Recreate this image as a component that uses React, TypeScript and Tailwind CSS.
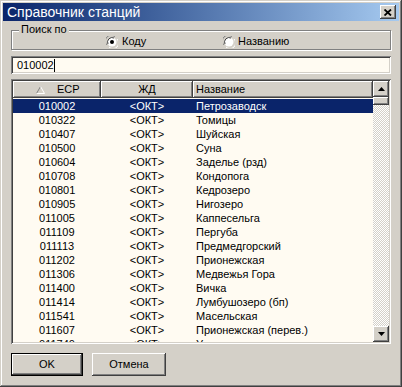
const ROWS: [string, string][] = [
  ["010002", "Петрозаводск"],
  ["010322", "Томицы"],
  ["010407", "Шуйская"],
  ["010500", "Суна"],
  ["010604", "Заделье (рзд)"],
  ["010708", "Кондопога"],
  ["010801", "Кедрозеро"],
  ["010905", "Нигозеро"],
  ["011005", "Каппесельга"],
  ["011109", "Пергуба"],
  ["011113", "Предмедгорский"],
  ["011202", "Прионежская"],
  ["011306", "Медвежья Гора"],
  ["011400", "Вичка"],
  ["011414", "Лумбушозеро (бп)"],
  ["011541", "Масельская"],
  ["011607", "Прионежская (перев.)"],
  ["011740", "Уссозеро"],
];

const raised =
  "bg-[#d4d0c8] shadow-[inset_-1px_-1px_#404040,inset_1px_1px_#fff,inset_-2px_-2px_#808080,inset_2px_2px_#d4d0c8]";
const sunken =
  "shadow-[inset_1px_1px_#808080,inset_-1px_-1px_#fff,inset_2px_2px_#404040,inset_-2px_-2px_#d4d0c8]";
const headerCell =
  "bg-[#d4d0c8] shadow-[inset_-1px_-1px_#404040,inset_1px_1px_#fff,inset_-2px_-2px_#808080]";

function Radio({ checked }: { checked?: boolean }) {
  return (
    <svg width="12" height="12" viewBox="0 0 12 12" className="shrink-0">
      <path d="M11 3 A5.5 5.5 0 0 1 3 11" stroke="#fff" strokeWidth="1" fill="none" />
      <path d="M1 9 A5.5 5.5 0 0 1 9 1" stroke="#808080" strokeWidth="1" fill="none" />
      <circle cx="6" cy="6" r="4.5" fill="#fff" />
      <path d="M2 8 A4.5 4.5 0 0 1 8 2" stroke="#404040" strokeWidth="1" fill="none" />
      {checked && <circle cx="6" cy="6" r="2" fill="#000" />}
    </svg>
  );
}

function Arrow({ up }: { up?: boolean }) {
  return (
    <svg width="7" height="4" viewBox="0 0 7 4">
      <path d={up ? "M3.5 0 L7 4 L0 4 Z" : "M0 0 L7 0 L3.5 4 Z"} fill="#000" />
    </svg>
  );
}

export default function App() {
  return (
    <div
      className="w-[402px] h-[387px] p-[3px] flex flex-col bg-[#d4d0c8] text-[11px] text-black shadow-[inset_-1px_-1px_#404040,inset_1px_1px_#d4d0c8,inset_-2px_-2px_#808080,inset_2px_2px_#fff]"
      style={{ fontFamily: '"Liberation Sans", Arial, sans-serif' }}
    >
      {/* Title bar */}
      <div className="h-[18px] flex items-center justify-between pl-[4px] pr-[3px] bg-gradient-to-r from-[#0a246a] to-[#a6caf0]">
        <span className="text-white text-[14px] leading-none">Справочник станций</span>
        <div className={`w-[16px] h-[14px] flex items-center justify-center ${raised}`}>
          <svg width="8" height="7" viewBox="0 0 8 7">
            <path d="M0.5 0.5 L7 6.5 M7 0.5 L0.5 6.5" stroke="#000" strokeWidth="1.8" />
          </svg>
        </div>
      </div>

      <div className="px-[8px] flex flex-col">
        {/* Group box */}
        <div className="relative mt-[9px] h-[20px] border border-[#808080] shadow-[inset_1px_1px_#fff,1px_1px_#fff] flex items-center">
          <span className="absolute left-[7px] -top-[8px] px-[2px] bg-[#d4d0c8] leading-[13px]">Поиск по</span>
          <div className="flex items-center pl-[94px] pt-[3px]">
            <div className="w-[117px] flex items-center gap-[4px]">
              <Radio checked />
              <span>Коду</span>
            </div>
            <div className="flex items-center gap-[3px]">
              <Radio />
              <span>Названию</span>
            </div>
          </div>
        </div>

        {/* Input */}
        <div className={`mt-[6px] h-[18px] flex items-center pl-[6px] bg-[#fffbf2] ${sunken}`}>
          <span className="leading-[13px]">010002</span>
          <span className="w-px h-[13px] bg-black" />
        </div>

        {/* List */}
        <div className={`mt-[5px] h-[265px] p-[2px] flex bg-[#fffbf2] ${sunken}`}>
          <div className="flex-1 flex flex-col overflow-hidden">
            <div className="h-[17px] flex shrink-0">
              <div className={`w-[88px] shrink-0 flex items-center pl-[23px] ${headerCell}`}>
                <svg width="9" height="8" viewBox="0 0 9 8" className="shrink-0">
                  <path d="M4.5 0.5 L0.5 7.5" stroke="#808080" />
                  <path d="M4.5 0.5 L8.5 7.5 M0.5 7.5 L8.5 7.5" stroke="#fff" />
                </svg>
                <span className="ml-[12px]">ЕСР</span>
              </div>
              <div className={`w-[92px] shrink-0 flex items-center justify-center ${headerCell}`}>ЖД</div>
              <div className={`flex-1 flex items-center pl-[3px] ${headerCell}`}>Название</div>
            </div>
            <div className="flex flex-col pt-px">
              {ROWS.map(([code, name], i) => (
                <div
                  key={code}
                  className={`h-[14px] shrink-0 flex items-center ${i === 0 ? "bg-[#0a246a] text-white" : ""}`}
                >
                  <div className="w-[88px] shrink-0 text-center">{code}</div>
                  <div className="w-[92px] shrink-0 text-center">&lt;ОКТ&gt;</div>
                  <div className="flex-1 pl-[3px] whitespace-nowrap">{name}</div>
                </div>
              ))}
            </div>
          </div>

          {/* Scrollbar */}
          <div className="w-[16px] flex flex-col">
            <div className={`h-[16px] flex items-center justify-center ${raised}`}>
              <Arrow up />
            </div>
            <div className={`h-[8px] ${raised}`} />
            <div className="flex-1 bg-[conic-gradient(#d4d0c8_25%,#fff_0_50%,#d4d0c8_0_75%,#fff_0)] bg-[length:2px_2px]" />
            <div className={`h-[16px] flex items-center justify-center ${raised}`}>
              <Arrow />
            </div>
          </div>
        </div>

        {/* Buttons */}
        <div className="mt-[9px] flex gap-[9px]">
          <div className="w-[72px] h-[23px] border border-black">
            <div className={`w-full h-full flex items-center justify-center ${raised}`}>OK</div>
          </div>
          <div className={`w-[74px] h-[23px] flex items-center justify-center ${raised}`}>Отмена</div>
        </div>
      </div>
    </div>
  );
}
